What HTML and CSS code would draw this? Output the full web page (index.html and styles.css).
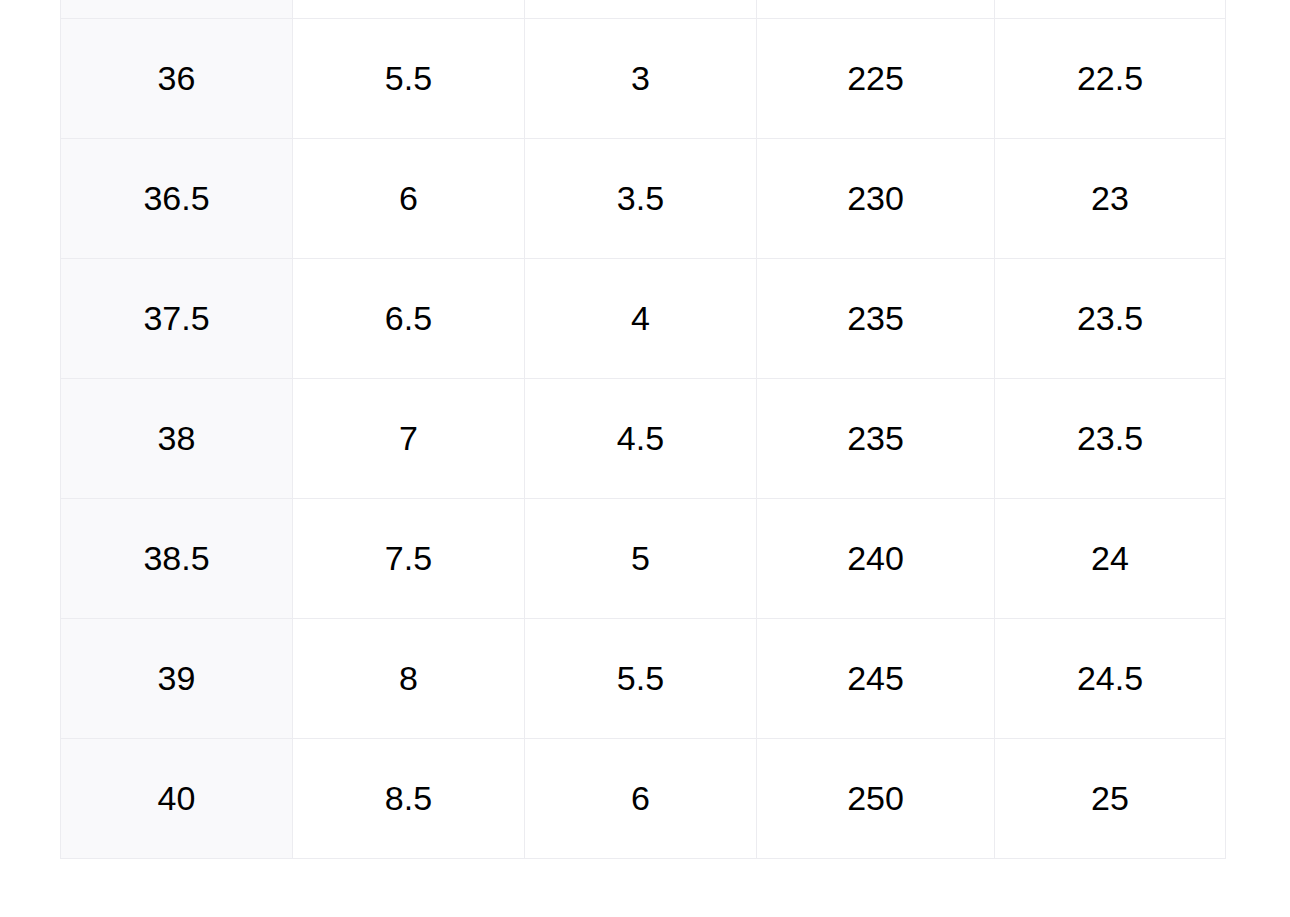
FILE: index.html
```html
<!DOCTYPE html>
<html>
<head>
<meta charset="utf-8">
<link rel="stylesheet" href="styles.css">
</head>
<body>
<div class="page">
  <table class="size-table">
    <colgroup>
      <col class="c1"><col class="c2"><col class="c3"><col class="c4"><col class="c5">
    </colgroup>
    <tbody>
      <tr class="partial"><td class="eu"></td><td></td><td></td><td></td><td></td></tr>
      <tr><td class="eu">36</td><td>5.5</td><td>3</td><td>225</td><td>22.5</td></tr>
      <tr><td class="eu">36.5</td><td>6</td><td>3.5</td><td>230</td><td>23</td></tr>
      <tr><td class="eu">37.5</td><td>6.5</td><td>4</td><td>235</td><td>23.5</td></tr>
      <tr><td class="eu">38</td><td>7</td><td>4.5</td><td>235</td><td>23.5</td></tr>
      <tr><td class="eu">38.5</td><td>7.5</td><td>5</td><td>240</td><td>24</td></tr>
      <tr><td class="eu">39</td><td>8</td><td>5.5</td><td>245</td><td>24.5</td></tr>
      <tr><td class="eu">40</td><td>8.5</td><td>6</td><td>250</td><td>25</td></tr>
    </tbody>
  </table>
</div>
</body>
</html>
```

FILE: styles.css
```css
html, body {
  margin: 0;
  padding: 0;
  background: #ffffff;
}

.page {
  padding-left: 60px;
  overflow: hidden;
  height: 917px;
}

.size-table {
  margin-top: -102px;
  width: 1165px;
  border-collapse: collapse;
  table-layout: fixed;
  font-family: "Liberation Sans", Arial, sans-serif;
  font-size: 34px;
  color: #000000;
}

.c1, .c2, .c3 { width: 232px; }
.c4 { width: 238px; }
.c5 { width: 231px; }

.size-table td {
  height: 117px;
  padding: 0 0 2px 0;
  text-align: center;
  vertical-align: middle;
  border: 1px solid #ececf0;
  line-height: 1;
}

.size-table td.eu {
  background: #f9f9fb;
}
```
